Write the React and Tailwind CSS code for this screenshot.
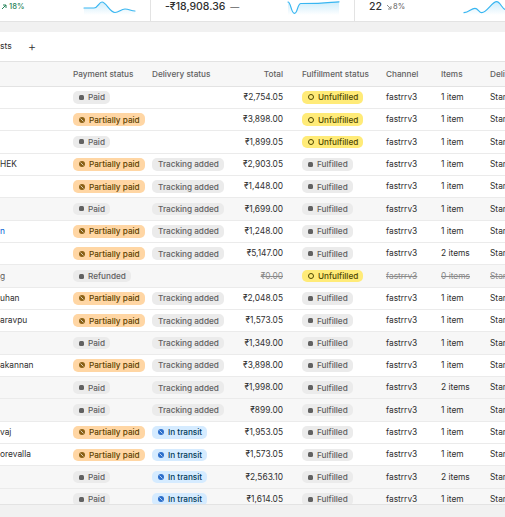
import React from 'react';

const ROWS = [
  { name: '', pay: 'paid', del: null, total: '₹2,754.05', ful: 'unfulfilled', items: '1 item' },
  { name: '', pay: 'partial', del: null, total: '₹3,898.00', ful: 'unfulfilled', items: '1 item' },
  { name: '', pay: 'paid', del: null, total: '₹1,899.05', ful: 'unfulfilled', items: '1 item' },
  { name: 'HEK', pay: 'partial', del: 'tracking', total: '₹2,903.05', ful: 'fulfilled', items: '1 item' },
  { name: '', pay: 'partial', del: 'tracking', total: '₹1,448.00', ful: 'fulfilled', items: '1 item' },
  { name: '', pay: 'paid', del: 'tracking', total: '₹1,699.00', ful: 'fulfilled', items: '1 item', closed: true },
  { name: 'n', link: true, pay: 'partial', del: 'tracking', total: '₹1,248.00', ful: 'fulfilled', items: '1 item' },
  { name: '', pay: 'partial', del: 'tracking', total: '₹5,147.00', ful: 'fulfilled', items: '2 items' },
  { name: 'g', pay: 'refunded', del: null, total: '₹0.00', ful: 'unfulfilled', items: '0 items', closed: true, struck: true },
  { name: 'uhan', pay: 'partial', del: 'tracking', total: '₹2,048.05', ful: 'fulfilled', items: '1 item' },
  { name: 'aravpu', pay: 'partial', del: 'tracking', total: '₹1,573.05', ful: 'fulfilled', items: '1 item' },
  { name: '', pay: 'paid', del: 'tracking', total: '₹1,349.00', ful: 'fulfilled', items: '1 item', closed: true },
  { name: 'akannan', pay: 'partial', del: 'tracking', total: '₹3,898.00', ful: 'fulfilled', items: '1 item' },
  { name: '', pay: 'paid', del: 'tracking', total: '₹1,998.00', ful: 'fulfilled', items: '2 items', closed: true },
  { name: '', pay: 'paid', del: 'tracking', total: '₹899.00', ful: 'fulfilled', items: '1 item', closed: true },
  { name: 'vaj', pay: 'partial', del: 'transit', total: '₹1,953.05', ful: 'fulfilled', items: '1 item' },
  { name: 'orevalla', pay: 'partial', del: 'transit', total: '₹1,573.05', ful: 'fulfilled', items: '1 item' },
  { name: '', pay: 'paid', del: 'transit', total: '₹2,563.10', ful: 'fulfilled', items: '2 items', closed: true },
  { name: '', pay: 'paid', del: 'transit', total: '₹1,614.05', ful: 'fulfilled', items: '1 item', closed: true },
];

function Dot() {
  return <span className="w-[5px] h-[5px] rounded-[1.5px] bg-[#616161] shrink-0" />;
}

function Ring() {
  return <span className="w-[6px] h-[6px] rounded-full border border-[#4f4700] shrink-0" />;
}

function Slashed({ color }) {
  return (
    <svg width="6" height="6" viewBox="0 0 6 6" className="shrink-0">
      <circle cx="3" cy="3" r="3" fill={color} />
      <path d="M1.6 1.6 L4.4 4.4" stroke="#fff" strokeWidth="1" opacity="0.7" />
    </svg>
  );
}

const BADGES = {
  paid: { label: 'Paid', cls: 'bg-[#ebebeb] text-[#616161]', icon: <Dot /> },
  refunded: { label: 'Refunded', cls: 'bg-[#ebebeb] text-[#616161]', icon: <Dot /> },
  partial: { label: 'Partially paid', cls: 'bg-[#ffd6a4] text-[#5e4200]', icon: <Slashed color="#8a6116" /> },
  tracking: { label: 'Tracking added', cls: 'bg-[#ebebeb] text-[#616161] pl-[5px]', icon: null },
  transit: { label: 'In transit', cls: 'bg-[#d5ebff] text-[#003a5a]', icon: <Slashed color="#2c6ecb" /> },
  unfulfilled: { label: 'Unfulfilled', cls: 'bg-[#ffeb78] text-[#4f4700]', icon: <Ring /> },
  fulfilled: { label: 'Fulfilled', cls: 'bg-[#ebebeb] text-[#616161]', icon: <Dot /> },
};

function Badge({ kind }) {
  const b = BADGES[kind];
  return (
    <span className={`inline-flex items-center gap-[4px] h-[12.5px] pl-[6px] pr-[5px] rounded-[5px] text-[8.2px] font-medium leading-none whitespace-nowrap ${b.cls}`}>
      {b.icon}
      {b.label}
    </span>
  );
}

function Spark({ d, fill }) {
  return (
    <svg width="51" height="14" viewBox="0 0 51 14" className="shrink-0 overflow-visible">
      <defs>
        <linearGradient id={`g${fill}`} x1="0" y1="0" x2="0" y2="1">
          <stop offset="0" stopColor="#38b6f1" stopOpacity="0.25" />
          <stop offset="1" stopColor="#38b6f1" stopOpacity="0" />
        </linearGradient>
      </defs>
      <path d={`${d} L51 14 L0 14 Z`} fill={`url(#g${fill})`} />
      <path d={d} fill="none" stroke="#38b6f1" strokeWidth="1.2" strokeLinecap="round" />
    </svg>
  );
}

function Arrow({ up, color }) {
  return (
    <svg width="6" height="6" viewBox="0 0 6 6" className="shrink-0">
      {up ? (
        <path d="M1 5 L5 1 M2 1 H5 V4" stroke={color} strokeWidth="1" fill="none" />
      ) : (
        <path d="M1 1 L5 5 M5 2 V5 H2" stroke={color} strokeWidth="1" fill="none" />
      )}
    </svg>
  );
}

export default function App() {
  return (
    <div className="w-[505px] h-[517px] overflow-hidden bg-[#f1f1f1] text-[#303030]" style={{ fontFamily: 'Inter, "Noto Sans", sans-serif' }}>
      {/* stat cards */}
      <div className="h-[22px] bg-white border-b border-[#e3e3e3] flex">
        <div className="w-[151px] shrink-0 border-r border-[#e3e3e3] flex justify-between items-start pl-[1px] pr-[15px] pt-[1px]">
          <span className="flex items-center gap-[2px] text-[7.6px] font-medium text-[#29845a] leading-[10px] mt-[1px]">
            <Arrow up color="#29845a" />18%
          </span>
          <Spark fill="a" d="M0 7 L10 7 C14 7 15 1 18 1 C22 1 26 11.5 31 11.5 C35 11.5 37 8 41 8 C45 8 47 10 51 10" />
        </div>
        <div className="w-[204px] shrink-0 border-r border-[#e3e3e3] flex justify-between items-start pl-[14px] pr-[15px] pt-[1px]">
          <span className="flex items-center gap-[5px] leading-[12px]">
            <span className="text-[10.5px] font-medium">-₹18,908.36</span>
            <span className="text-[9px] text-[#616161]">—</span>
          </span>
          <Spark fill="b" d="M0 1 C3 1 3 12.3 6.5 12.3 C10 12.3 9 2.5 13 2.5 L30 2.3 C40 2 45 1 51 0.8" />
        </div>
        <div className="flex-1 flex justify-between items-start pl-[14px] pt-[1px] overflow-hidden">
          <span className="flex items-center gap-[4px] leading-[12px]">
            <span className="text-[10.5px] font-medium">22</span>
            <span className="flex items-center gap-[1px] text-[7.6px] text-[#616161]">
              <Arrow color="#8a8a8a" />8%
            </span>
          </span>
          <span className="mr-[-10px]">
            <Spark fill="c" d="M0 11.7 C5 11.7 7 7.3 11 7.3 C14 7.3 15 11.7 17.7 11.7 C23 11.7 28 0.7 32.7 0.7 C36 0.7 38 7.3 41 8.5 C45 10 48 10 51 10" />
          </span>
        </div>
      </div>

      {/* table card */}
      <div className="mt-[10px] h-[473px] bg-white border-b border-[#e3e3e3] overflow-hidden">
        <div className="h-[30px] flex items-center border-b border-[#e3e3e3] text-[8.6px]">
          <span className="text-[#303030]">sts</span>
          <span className="ml-[16px] text-[13px] font-light leading-none text-[#303030]">+</span>
        </div>

        <div className="h-[24.6px] bg-[#f7f7f7] border-b border-[#e3e3e3] flex items-center text-[8.2px] font-medium text-[#616161] whitespace-nowrap">
          <div className="w-[73px] shrink-0" />
          <div className="w-[79px] shrink-0">Payment status</div>
          <div className="w-[78px] shrink-0">Delivery status</div>
          <div className="w-[72px] shrink-0 pr-[19px] text-right">Total</div>
          <div className="w-[84px] shrink-0">Fulfillment status</div>
          <div className="w-[55px] shrink-0">Channel</div>
          <div className="w-[49px] shrink-0">Items</div>
          <div>Delivery method</div>
        </div>

        {ROWS.map((r, i) => {
          const strike = r.struck ? 'line-through text-[#8a8a8a]' : '';
          return (
            <div
              key={i}
              className={`h-[22.35px] border-b border-[#ebebeb] flex items-center text-[8.4px] whitespace-nowrap ${r.closed ? 'bg-[#f7f7f7]' : 'bg-white'}`}
            >
              <div className={`w-[73px] shrink-0 overflow-hidden ${r.link ? 'text-[#005bd3]' : r.closed ? 'text-[#616161]' : 'text-[#303030]'}`}>
                {r.name}
              </div>
              <div className="w-[79px] shrink-0 flex"><Badge kind={r.pay} /></div>
              <div className="w-[78px] shrink-0 flex">{r.del && <Badge kind={r.del} />}</div>
              <div className={`w-[72px] shrink-0 pr-[19px] text-right ${strike}`}>{r.total}</div>
              <div className="w-[84px] shrink-0 flex"><Badge kind={r.ful} /></div>
              <div className={`w-[55px] shrink-0 ${strike}`}>fastrrv3</div>
              <div className={`w-[49px] shrink-0 ${strike}`}>{r.items}</div>
              <div className={strike}>Standard</div>
            </div>
          );
        })}
      </div>
    </div>
  );
}
